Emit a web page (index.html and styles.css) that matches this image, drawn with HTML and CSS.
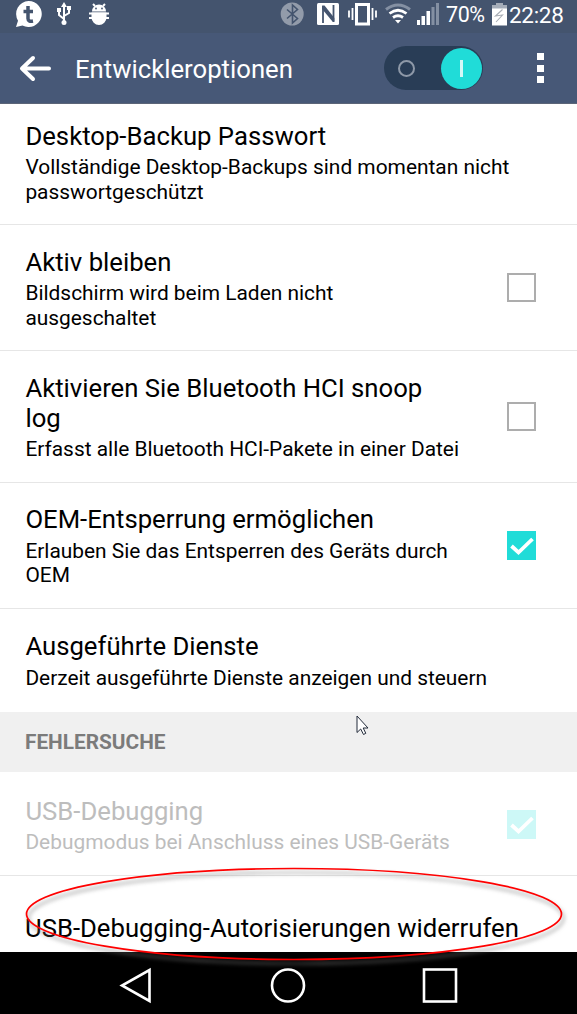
FILE: index.html
```html
<!DOCTYPE html>
<html lang="de">
<head>
    <meta charset="UTF-8">
    <meta name="viewport" content="width=device-width, initial-scale=1.0">
    <title>Entwickleroptionen</title>
    <link rel="stylesheet" href="styles.css">
</head>
<body>
    <div class="phone">
        <div class="statusbar">
            <svg class="notifications" width="120" height="33" viewBox="0 0 120 33">
                <path d="M28.500 1a13 13 0 1 1-6 24.400L16 27l2-6.300A13 13 0 0 1 28.500 1z" fill="#fff"/>
                <path d="M28 6v12.500q0 3.500 5 2.500M23.500 11.500h9.500" fill="none" stroke="#44546e" stroke-width="3.500"/>
                <path d="M64 5v17M64 19l-5-4v-4M64 16l5-3V9" fill="none" stroke="#fff" stroke-width="2"/>
                <path d="M64 2l3 5h-6zM57 8h4v4h-4zM67 6h4v4h-4z" fill="#fff"/>
                <circle cx="64" cy="22.500" r="2.500" fill="#fff"/>
                <path d="M92 11.500a7 7 0 0 1 14 0zM91.500 12.500h15v5a7.500 7.500 0 0 1-15 0z" fill="#fff"/>
                <path d="M95 6l-2-2M103 6l2-2M89 13.500h20M89 18h20" stroke="#fff" stroke-width="2"/>
                <circle cx="96" cy="8.500" r="0.900" fill="#44546e"/>
                <circle cx="102" cy="8.500" r="0.900" fill="#44546e"/>
            </svg>
            <div class="indicators">
                <svg width="164" height="33" viewBox="278 0 164 33">
                    <circle cx="292.200" cy="14" r="11.500" fill="#929baa"/>
                    <path d="M287 9.500l10.500 9-5 4.500V5l5 4.500-10.500 9" fill="none" stroke="#44546e" stroke-width="1.600"/>
                    <rect x="317" y="3" width="22" height="22" rx="1.500" fill="#fff"/>
                    <path d="M323 23V6M333.500 5v16.500" fill="none" stroke="#44546e" stroke-width="1.800"/>
                    <path d="M322.100 5.500h2.400l9.900 12.500v4h-1.500l-10.800-13z" fill="#44546e"/>
                    <rect x="356.500" y="4.500" width="12" height="19.500" fill="none" stroke="#fff" stroke-width="3"/>
                    <path d="M352.500 8v12M349 10.500v7M372.500 8v12M376 10.500v7" stroke="#fff" stroke-width="1.800"/>
                    <path d="M386 9.500q12-9 24 0" fill="none" stroke="#8490a3" stroke-width="3"/>
                    <path d="M389.500 13.500q8.500-6.500 17 0M393 17.500q5-3.500 10 0" fill="none" stroke="#fff" stroke-width="2.800"/>
                    <path d="M395 20h6l-3 3.500z" fill="#fff"/>
                    <path d="M417 20h3v5h-3zM421.500 16h3.500v9h-3.500zM426.500 11h3.500v14h-3.500z" fill="#fff"/>
                    <path d="M431.500 7h3v18h-3zM436 3h3v22h-3z" fill="#8490a3"/>
                </svg>
                <span class="percent">70%</span>
                <svg class="battery" width="17" height="33" viewBox="0 0 17 33">
                    <path d="M5 3h7v2h4v4H1V5h4z" fill="#a5adb9"/>
                    <path d="M1 8.500h15v17H1z" fill="#fff"/>
                    <path d="M11.500 9.500l-7 6.500 7-1-6.500 7" fill="none" stroke="#a9aeb6" stroke-width="1.100"/>
                </svg>
                <span class="clock">22:28</span>
            </div>
        </div>

        <div class="appbar">
            <svg class="back" width="32" height="28" viewBox="0 0 32 28">
                <path d="M30 14.500H3M14 4L3 14.500 14 25" fill="none" stroke="#fff" stroke-width="4" stroke-linecap="round" stroke-linejoin="round"/>
            </svg>
            <h1>Entwickleroptionen</h1>
            <div class="switch">
                <span class="off-mark"></span>
                <span class="knob"></span>
            </div>
            <div class="more"><i></i><i></i><i></i></div>
        </div>

        <div class="list">
            <div class="row first">
                <div class="text wide">
                    <h2>Desktop-Backup Passwort</h2>
                    <p>Vollständige Desktop-Backups sind momentan nicht passwortgeschützt</p>
                </div>
            </div>
            <div class="row">
                <div class="text">
                    <h2>Aktiv bleiben</h2>
                    <p>Bildschirm wird beim Laden nicht ausgeschaltet</p>
                </div>
                <span class="checkbox"></span>
            </div>
            <div class="row">
                <div class="text">
                    <h2>Aktivieren Sie Bluetooth HCI snoop log</h2>
                    <p>Erfasst alle Bluetooth HCI-Pakete in einer Datei</p>
                </div>
                <span class="checkbox"></span>
            </div>
            <div class="row">
                <div class="text">
                    <h2>OEM-Entsperrung ermöglichen</h2>
                    <p>Erlauben Sie das Entsperren des Geräts durch OEM</p>
                </div>
                <span class="checkbox checked">
                    <svg width="29" height="29" viewBox="0 0 29 29"><path d="M4.500 15l7 6.500L25.500 8" fill="none" stroke="#fff" stroke-width="3.800"/></svg>
                </span>
            </div>
            <div class="row last-of-group">
                <div class="text wide">
                    <h2>Ausgeführte Dienste</h2>
                    <p>Derzeit ausgeführte Dienste anzeigen und steuern</p>
                </div>
            </div>
            <div class="section">FEHLERSUCHE</div>
            <div class="row disabled">
                <div class="text">
                    <h2>USB-Debugging</h2>
                    <p>Debugmodus bei Anschluss eines USB-Geräts</p>
                </div>
                <span class="checkbox checked">
                    <svg width="29" height="29" viewBox="0 0 29 29"><path d="M4.500 15l7 6.500L25.500 8" fill="none" stroke="#fff" stroke-width="3.800"/></svg>
                </span>
            </div>
            <div class="row single">
                <div class="text wide">
                    <h2>USB-Debugging-Autorisierungen widerrufen</h2>
                </div>
            </div>
        </div>

        <div class="navbar">
            <svg width="577" height="62" viewBox="0 0 577 62">
                <g fill="none" stroke="#fff" stroke-width="2.600">
                    <path d="M149.500 18v31L122 33.500z"/>
                    <circle cx="288" cy="33.500" r="16"/>
                    <rect x="424" y="17.500" width="32" height="32"/>
                </g>
            </svg>
        </div>

        <!-- red marker around the last entry -->
        <svg class="marker" width="577" height="120" viewBox="0 0 577 120">
            <ellipse cx="294" cy="54" rx="267.500" ry="45.500" fill="none" stroke="#f00" stroke-width="1.700"/>
        </svg>
        <svg class="cursor" width="14" height="21" viewBox="0 0 14 21">
            <path d="M1 1v16.500l3.700-3.500 2.800 5.500 2.300-1.200-2.600-5.300H12z" fill="#fff" stroke="#222b3a" stroke-width="1"/>
        </svg>
    </div>
</body>
</html>
```
FILE: styles.css
```css
body {
    margin: 0;
    background-color: #fff;
    color: #000;
    font-family: Roboto, sans-serif;
}

.phone {
    position: relative;
    display: flex;
    flex-direction: column;
    width: 577px;
    height: 1014px;
    overflow: hidden;
}

.statusbar {
    display: flex;
    justify-content: space-between;
    height: 33px;
    background-color: #44546e;
    color: #fff;
}

.indicators {
    display: flex;
    padding-right: 12px;
    line-height: 30px;
}

.percent {
    width: 46px;
    margin-left: 4px;
    font-size: 21.5px;
    letter-spacing: -0.4px;
}

.battery {
    margin-left: -1px;
    margin-right: 1px;
}

.clock {
    width: 56px;
    font-size: 22.5px;
    letter-spacing: -0.3px;
    white-space: nowrap;
}

.appbar {
    display: flex;
    align-items: center;
    box-sizing: border-box;
    height: 71px;
    padding: 0 33px 0 19px;
    background-color: #475877;
    border-bottom: 1px solid #5c6578;
    color: #fff;
}

.appbar h1 {
    flex: 1;
    margin: 0 0 0 24px;
    padding-top: 2px;
    font-size: 25.7px;
    font-weight: 400;
    line-height: 30px;
}

.switch {
    display: flex;
    align-items: center;
    justify-content: space-between;
    box-sizing: border-box;
    width: 99px;
    height: 44px;
    padding: 0 1px 0 14px;
    border-radius: 22px;
    background-color: #293d56;
}

.off-mark {
    box-sizing: border-box;
    width: 17px;
    height: 17px;
    border: 2px solid #8e99a8;
    border-radius: 50%;
}

.knob {
    display: flex;
    align-items: center;
    justify-content: center;
    width: 41px;
    height: 41px;
    border-radius: 50%;
    background-color: #20dcd8;
}

.knob::before {
    content: "";
    width: 3px;
    height: 17px;
    background-color: #d5f8f7;
}

.more {
    display: flex;
    flex-direction: column;
    gap: 4.5px;
    margin-left: 54px;
}

.more i {
    width: 7px;
    height: 7px;
    background-color: #fff;
}

.list {
    height: 848px;
    overflow: hidden;
}

.row {
    display: flex;
    align-items: center;
    justify-content: space-between;
    box-sizing: border-box;
    padding: 21.5px 41px 20px 25.4px;
    border-bottom: 1px solid #e6e6e6;
}

.row.first {
    padding-top: 16.5px;
}

.row.last-of-group {
    border-bottom: none;
    padding-top: 22.5px;
    padding-bottom: 22px;
}

.row.single {
    padding: 36.5px 25px 22px;
}

.text {
    width: 436px;
}

.text.wide {
    width: 510px;
}

.row h2 {
    margin: 0;
    font-size: 25.7px;
    font-weight: 400;
    line-height: 30px;
}

.row p {
    margin: 4.5px 0 0;
    font-size: 20.9px;
    line-height: 24.5px;
}

.checkbox {
    box-sizing: border-box;
    width: 29px;
    height: 29px;
    margin-bottom: 2px;
    border: 2px solid #adadad;
}

.checkbox.checked {
    margin-bottom: 1px;
    border: none;
    background-color: #20dcd8;
}

.checkbox svg {
    display: block;
}

.disabled .text {
    color: #bdbdbd;
}

.disabled .checkbox {
    background-color: #cdf8f7;
}

.section {
    height: 60px;
    padding-left: 25px;
    background-color: #f0f0f0;
    color: #7b7b7b;
    font-size: 20.8px;
    font-weight: 700;
    line-height: 61px;
}

.row.disabled {
    padding-top: 23.5px;
    padding-bottom: 20.5px;
}

.navbar {
    height: 62px;
    background-color: #000;
}

.marker {
    position: absolute;
    left: 0;
    top: 860px;
    filter: drop-shadow(2px 4px 2px rgba(120, 120, 120, 0.8));
}

.cursor {
    position: absolute;
    left: 356px;
    top: 715px;
}
```
